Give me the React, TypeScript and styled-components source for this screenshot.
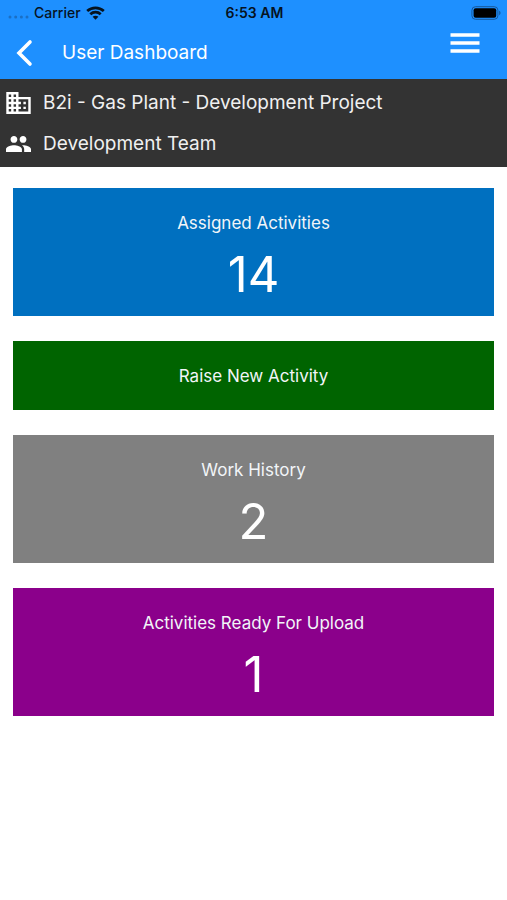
import React from "react";
import styled, { createGlobalStyle } from "styled-components";

const GlobalStyle = createGlobalStyle`
  *, *::before, *::after { box-sizing: border-box; }
  body {
    margin: 0;
    background: #fff;
    font-family: Inter, "Liberation Sans", sans-serif;
  }
`;

const Header = styled.header`
  background: #1e90ff;
  color: #fff;
`;

const StatusBar = styled.div`
  display: grid;
  grid-template-columns: 1fr auto 1fr;
  align-items: center;
  height: 26px;
  padding: 0 6px 0 8px;
  color: #06131f;
  font-size: 14px;
  font-weight: 500;
  line-height: 20px;
`;

const StatusGroup = styled.div<{ $end?: boolean }>`
  display: flex;
  align-items: center;
  justify-content: ${(p) => (p.$end ? "flex-end" : "flex-start")};
  gap: 5px;
`;

const Clock = styled.span`
  font-weight: 600;
`;

const TitleBar = styled.div`
  display: flex;
  align-items: center;
  height: 53px;
  padding: 0 27px 0 9px;
`;

const IconButton = styled.button<{ $raised?: boolean }>`
  display: flex;
  align-items: center;
  justify-content: center;
  width: 30px;
  height: 34px;
  padding: 0;
  border: 0;
  background: none;
  color: inherit;
  cursor: pointer;
  align-self: ${(p) => (p.$raised ? "flex-start" : "center")};
`;

const Title = styled.h1`
  flex: 1;
  margin: 0;
  padding-left: 23px;
  font-size: 19px;
  font-weight: 400;
  line-height: 24px;
`;

const ProjectInfo = styled.section`
  display: flex;
  flex-direction: column;
  gap: 17px;
  padding: 12px 6px 11px;
  background: #333;
  color: #f0f0f0;
`;

const InfoRow = styled.div`
  display: flex;
  align-items: center;
  gap: 12px;
  font-size: 19px;
  line-height: 24px;

  svg {
    flex: none;
    color: #fff;
  }
`;

const CardList = styled.main`
  display: flex;
  flex-direction: column;
  gap: 25px;
  padding: 21px 13px;
`;

const Card = styled.button<{ $color: string }>`
  display: flex;
  flex-direction: column;
  align-items: center;
  gap: 23px;
  width: 100%;
  padding: 25px 16px 23px;
  border: 0;
  background: ${(p) => p.$color};
  color: #fff;
  font-family: inherit;
  cursor: pointer;
`;

const CardLabel = styled.span`
  font-size: 17px;
  line-height: 21px;
  color: #f2f5f8;
`;

const CardCount = styled.span`
  font-size: 49px;
  font-weight: 400;
  line-height: 36px;
`;

const cards = [
  { label: "Assigned Activities", count: 14, color: "#0070c0" },
  { label: "Raise New Activity", color: "#006400" },
  { label: "Work History", count: 2, color: "#808080" },
  { label: "Activities Ready For Upload", count: 1, color: "#8b008b" },
];

const SignalDots = () => (
  <svg width="21" height="14" viewBox="0 0 21 14" fill="#1b6fc4" aria-hidden="true">
    <circle cx="2" cy="11" r="1.5" />
    <circle cx="7.7" cy="11" r="1.5" />
    <circle cx="13.4" cy="11" r="1.5" />
    <circle cx="19" cy="11" r="1.5" />
  </svg>
);

const WifiIcon = () => (
  <svg width="19" height="14" viewBox="0 0 19 14" fill="none" stroke="#06131f" strokeWidth="2.7" aria-hidden="true">
    <path d="M1.2 5.1C5.8.8 13.2.8 17.8 5.1" />
    <path d="M4.3 8.3c2.9-2.8 7.5-2.8 10.4 0" />
    <path d="M9.5 13.8 6.6 10.8c1.6-1.5 4.2-1.5 5.8 0Z" fill="#06131f" stroke="none" />
  </svg>
);

const BatteryIcon = () => (
  <svg width="30" height="14" viewBox="0 0 30 14" aria-hidden="true">
    <rect x="0.9" y="0.7" width="26" height="12.6" rx="3.6" fill="none" stroke="#17589a" />
    <rect x="2.6" y="2.3" width="22.6" height="9.4" rx="2" fill="#000" />
    <path d="M28.2 4.8c1.7.6 1.7 3.8 0 4.4Z" fill="#17589a" />
  </svg>
);

const BackIcon = () => (
  <svg width="18" height="28" viewBox="0 0 18 28" fill="none" stroke="currentColor" strokeWidth="3.6" strokeLinecap="round" aria-hidden="true">
    <path d="M15 3 4 14l11 11" />
  </svg>
);

const MenuIcon = () => (
  <svg width="30" height="20" viewBox="0 0 30 20" fill="currentColor" aria-hidden="true">
    <path d="M.5 .2h29v3.6H.5zM.5 8.2h29v3.6H.5zM.5 16.2h29v3.6H.5z" />
  </svg>
);

const BuildingIcon = () => (
  <svg width="25" height="22" viewBox="2 3 20 18" fill="currentColor" aria-hidden="true">
    <path d="M12 7V3H2v18h20V7H12zM6 19H4v-2h2v2zm0-4H4v-2h2v2zm0-4H4V9h2v2zm0-4H4V5h2v2zm4 12H8v-2h2v2zm0-4H8v-2h2v2zm0-4H8V9h2v2zm0-4H8V5h2v2zm10 12h-8v-2h2v-2h-2v-2h2v-2h-2V9h8v10zm-2-8h-2v2h2v-2zm0 4h-2v2h2v-2z" />
  </svg>
);

const PeopleIcon = () => (
  <svg width="25" height="16" viewBox="1 5 22 14" fill="currentColor" aria-hidden="true">
    <path d="M16 11c1.66 0 2.99-1.34 2.99-3S17.66 5 16 5s-3 1.34-3 3 1.34 3 3 3zm-8 0c1.66 0 2.99-1.34 2.99-3S9.66 5 8 5 5 6.34 5 8s1.34 3 3 3zm0 2c-2.33 0-7 1.17-7 3.5V19h14v-2.5c0-2.33-4.67-3.5-7-3.5zm8 0c-.29 0-.62.02-.97.05 1.16.84 1.97 1.97 1.97 3.45V19h6v-2.5c0-2.33-4.67-3.5-7-3.5z" />
  </svg>
);

export default function App() {
  return (
    <>
      <GlobalStyle />
      <Header>
        <StatusBar>
          <StatusGroup>
            <SignalDots />
            <span>Carrier</span>
            <WifiIcon />
          </StatusGroup>
          <Clock>6:53 AM</Clock>
          <StatusGroup $end>
            <BatteryIcon />
          </StatusGroup>
        </StatusBar>
        <TitleBar>
          <IconButton type="button" aria-label="Back">
            <BackIcon />
          </IconButton>
          <Title>User Dashboard</Title>
          <IconButton type="button" aria-label="Menu" $raised>
            <MenuIcon />
          </IconButton>
        </TitleBar>
      </Header>
      <ProjectInfo>
        <InfoRow>
          <BuildingIcon />
          <span>B2i - Gas Plant - Development Project</span>
        </InfoRow>
        <InfoRow>
          <PeopleIcon />
          <span>Development Team</span>
        </InfoRow>
      </ProjectInfo>
      <CardList>
        {cards.map((card) => (
          <Card key={card.label} type="button" $color={card.color}>
            <CardLabel>{card.label}</CardLabel>
            {card.count !== undefined && <CardCount>{card.count}</CardCount>}
          </Card>
        ))}
      </CardList>
    </>
  );
}
